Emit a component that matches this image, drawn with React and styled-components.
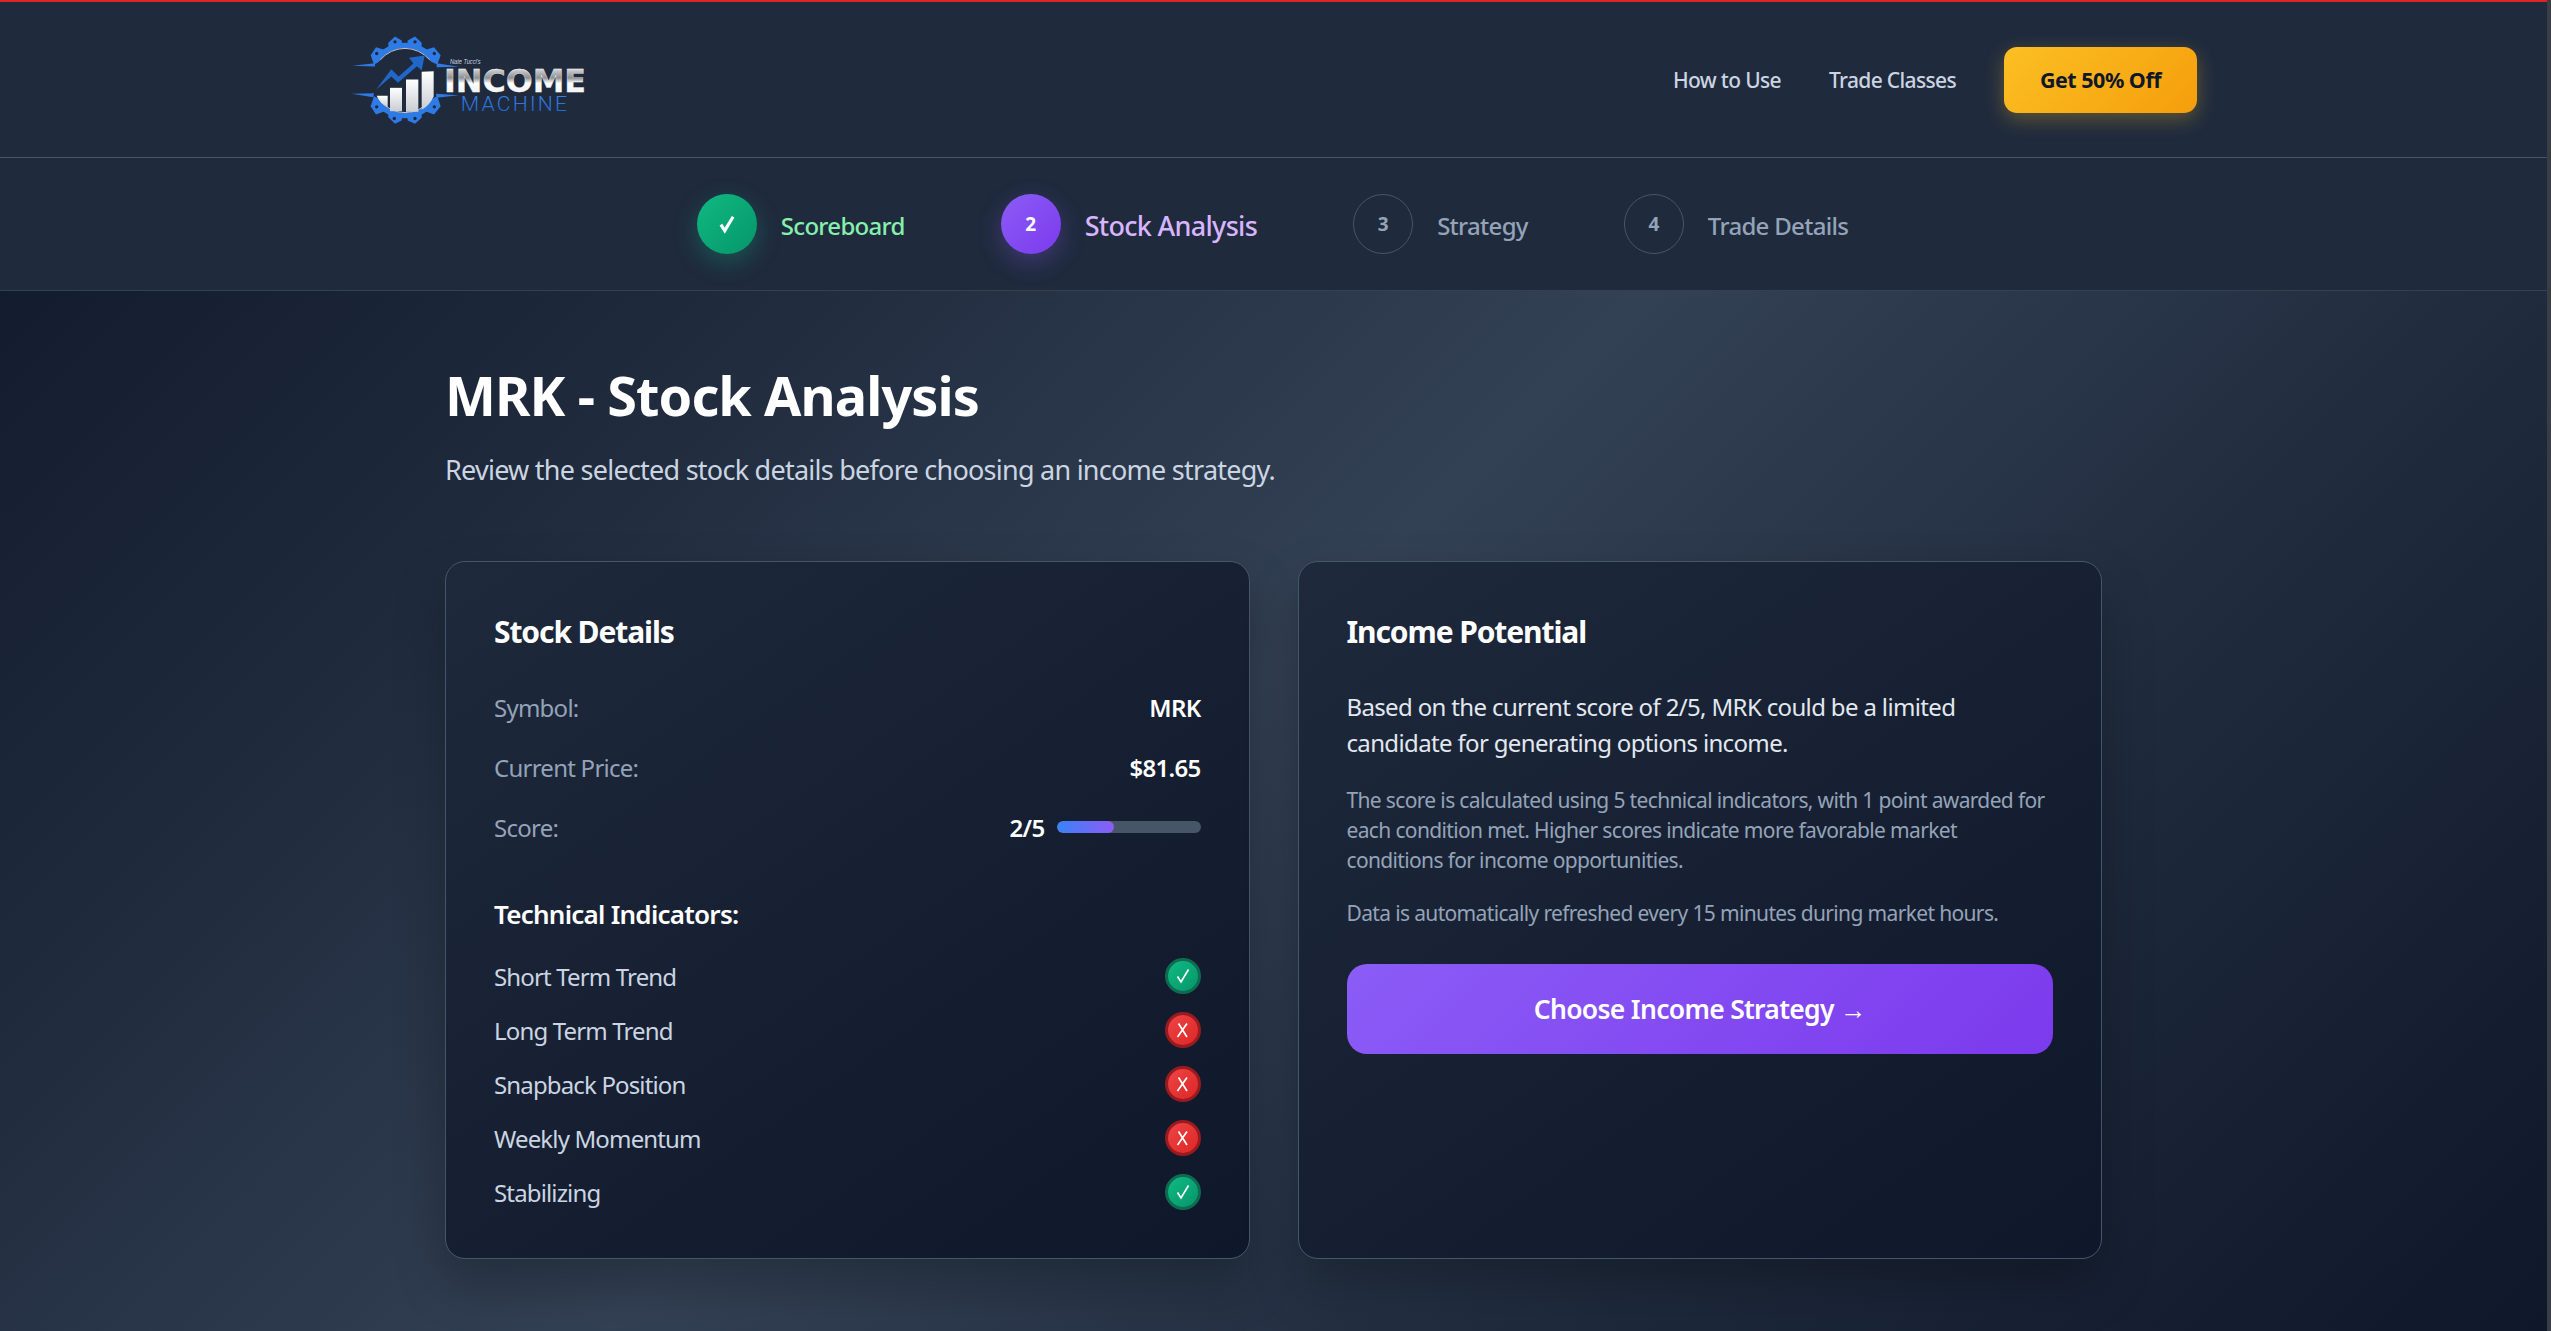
import React from "react";
import styled, { createGlobalStyle } from "styled-components";

const GlobalStyle = createGlobalStyle`
  * { box-sizing: border-box; }
  html, body { margin: 0; padding: 0; background: #0f172a; overflow: hidden; }
  body { font-family: "Noto Sans", "Open Sans", sans-serif; }
`;

const Shell = styled.div`
  display: flex;
  width: 2551px;
  height: 1331px;
  overflow: hidden;
`;

const ScrollEdge = styled.div`
  width: 4px;
  flex: none;
  background: #3a3d42;
`;

const Page = styled.div`
  flex: 1;
  min-width: 0;
  display: flex;
  flex-direction: column;
  background: linear-gradient(135deg, #0f172a 0%, #1e293b 25%, #334155 50%, #1e293b 75%, #0f172a 100%);
`;

const Header = styled.header`
  height: 158px;
  flex: none;
  border-top: 2px solid #dc2626;
  border-bottom: 1px solid #475569;
  background: #1f2a3d;
  display: flex;
  justify-content: center;
  align-items: center;
`;

const HeaderInner = styled.div`
  width: 1847px;
  display: flex;
  align-items: center;
  justify-content: space-between;
`;

const Nav = styled.nav`
  display: flex;
  align-items: center;
  gap: 48px;
`;

const NavLink = styled.a`
  font-size: 21px;
  font-weight: 500;
  letter-spacing: -0.65px;
  color: #cbd5e1;
`;

const OfferButton = styled.a`
  width: 193px;
  height: 66px;
  display: flex;
  align-items: center;
  justify-content: center;
  border-radius: 13px;
  font-size: 21.5px;
  font-weight: 700;
  letter-spacing: -0.5px;
  color: #0f172a;
  background: linear-gradient(135deg, #fbbf24, #f59e0b);
  box-shadow: 0 6px 20px rgba(251, 191, 36, 0.3);
`;

const Stepper = styled.div`
  height: 133px;
  flex: none;
  display: flex;
  align-items: center;
  justify-content: center;
  gap: 96px;
  padding-right: 2px;
  background: #1f2a3d;
  border-bottom: 1px solid #334155;
`;

const Step = styled.div`
  display: flex;
  align-items: center;
  gap: 24px;
`;

const stepFills = {
  done: "background: linear-gradient(135deg, #10b981, #059669); box-shadow: 0 8px 24px rgba(16, 185, 129, 0.3); color: #fff;",
  active: "background: linear-gradient(135deg, #8b5cf6, #7c3aed); box-shadow: 0 8px 24px rgba(139, 92, 246, 0.3); color: #fff;",
  todo: "border: 1px solid #475569; color: #94a3b8;",
};

const StepCircle = styled.div`
  width: 60px;
  height: 60px;
  border-radius: 50%;
  display: flex;
  align-items: center;
  justify-content: center;
  font-size: 19px;
  font-weight: 700;
  ${(p) => stepFills[p.$state]}
`;

const stepColors = { done: "#86efac", active: "#d8b4fe", todo: "#94a3b8" };

const StepLabel = styled.span`
  padding-top: 2px;
  font-size: ${(p) => (p.$state === "active" ? 27 : 24)}px;
  font-weight: 500;
  letter-spacing: -0.7px;
  color: ${(p) => stepColors[p.$state]};
`;

const Main = styled.main`
  width: 1657px;
  margin: 0 auto;
  padding-top: 62px;
`;

const Title = styled.h1`
  margin: 0;
  font-size: 54px;
  line-height: 84px;
  font-weight: 700;
  letter-spacing: -0.9px;
  color: #fff;
`;

const Subtitle = styled.p`
  margin: 12px 0 0;
  font-size: 27px;
  line-height: 42px;
  letter-spacing: -0.75px;
  color: #cbd5e1;
`;

const Cards = styled.div`
  margin-top: 70px;
  display: grid;
  grid-template-columns: 1fr 1fr;
  gap: 48px;
`;

const Card = styled.section`
  height: 698px;
  padding: 48px;
  border: 1px solid #475569;
  border-radius: 20px;
  background: linear-gradient(145deg, #1e293b, #0f172a);
  box-shadow: 0 25px 50px rgba(0, 0, 0, 0.25);
`;

const CardTitle = styled.h2`
  margin: 0 0 23px;
  font-size: 30px;
  line-height: 44px;
  font-weight: 700;
  letter-spacing: -1.1px;
  color: #fff;
`;

const DetailRow = styled.div`
  height: 60px;
  display: flex;
  align-items: center;
  justify-content: space-between;
`;

const DetailLabel = styled.span`
  font-size: 24px;
  letter-spacing: -0.75px;
  color: #94a3b8;
`;

const DetailValue = styled.span`
  display: flex;
  align-items: center;
  gap: 12px;
  font-size: 24px;
  font-weight: 600;
  letter-spacing: -0.7px;
  color: #fff;
`;

const ScoreTrack = styled.div`
  width: 144px;
  height: 12px;
  border-radius: 6px;
  overflow: hidden;
  background: #475569;
`;

const ScoreFill = styled.div`
  height: 100%;
  border-radius: 6px;
  background: linear-gradient(90deg, #3b82f6, #8b5cf6);
`;

const SubTitle = styled.h3`
  margin: 37px 0 15px;
  font-size: 26px;
  line-height: 40px;
  font-weight: 600;
  letter-spacing: -0.75px;
  color: #fff;
`;

const IndicatorRow = styled.div`
  height: 54px;
  display: flex;
  align-items: center;
  justify-content: space-between;
`;

const IndicatorName = styled.span`
  font-size: 24px;
  letter-spacing: -0.85px;
  color: #cbd5e1;
`;

const Badge = styled.span`
  width: 36px;
  height: 36px;
  border-radius: 50%;
  display: flex;
  align-items: center;
  justify-content: center;
  border: 3px solid ${(p) => (p.$ok ? "#0f6b50" : "#991b1f")};
  background: ${(p) => (p.$ok ? "linear-gradient(135deg, #10b981, #059669)" : "linear-gradient(135deg, #ef4444, #dc2626)")};
`;

const Lead = styled.p`
  margin: 0 0 24px;
  padding-top: 12px;
  font-size: 24px;
  line-height: 36px;
  letter-spacing: -0.65px;
  color: #e2e8f0;
`;

const Note = styled.p`
  margin: 0 0 23px;
  font-size: 21px;
  line-height: 30px;
  letter-spacing: -0.65px;
  color: #94a3b8;
`;

const StrategyButton = styled.a`
  margin-top: 36px;
  height: 90px;
  display: flex;
  align-items: center;
  justify-content: center;
  border-radius: 20px;
  font-size: 26.5px;
  font-weight: 600;
  letter-spacing: -0.7px;
  color: #fff;
  background: linear-gradient(135deg, #8b5cf6, #7c3aed);
`;

const CheckMark = ({ size = 18, weight = 1.7 }) => (
  <svg width={size} height={size} viewBox="0 0 18 18" fill="none" stroke="#fff" strokeWidth={weight}>
    <path d="M3.5 9.5 L7 15 L14.5 2.5" />
  </svg>
);

const CrossMark = () => (
  <svg width="18" height="18" viewBox="0 0 18 18" fill="none" stroke="#fff" strokeWidth="1.7">
    <path d="M4.5 2.5 L13 16 M13 2.5 L3.5 16" />
  </svg>
);

// gear, bars and arrow drawn in the coordinates of a 3x crop of the logo
const Logo = () => (
  <svg width="240" height="97" viewBox="90 90 720 290" fill="none">
    <defs>
      <linearGradient id="chrome" x1="0" y1="0" x2="0" y2="1">
        <stop offset="0" stopColor="#ffffff" />
        <stop offset="0.4" stopColor="#8d8f93" />
        <stop offset="0.55" stopColor="#ffffff" />
        <stop offset="1" stopColor="#e4e6ea" />
      </linearGradient>
      <linearGradient id="bar" x1="0" y1="0" x2="0" y2="1">
        <stop offset="0" stopColor="#ffffff" />
        <stop offset="1" stopColor="#c9ccd2" />
      </linearGradient>
      <linearGradient id="machine" x1="0" y1="0" x2="0" y2="1">
        <stop offset="0" stopColor="#3b87f0" />
        <stop offset="1" stopColor="#1a5fc8" />
      </linearGradient>
    </defs>
    <g fill="#2f7be6">
      <path d="M205 125 L225 106 L245 118 L248 138 L205 152 Z" />
      <path d="M263 118 L285 106 L305 125 L305 152 L262 138 Z" />
      <path d="M310 148 L342 138 L362 162 L352 190 L325 178 Z" />
      <path d="M200 148 L168 138 L152 162 L162 190 L186 178 Z" />
      <path d="M205 348 L225 368 L245 358 L248 338 L205 322 Z" />
      <path d="M263 358 L285 368 L305 350 L305 322 L262 338 Z" />
      <path d="M310 328 L342 340 L362 315 L352 285 L325 298 Z" />
      <path d="M200 328 L168 340 L152 315 L162 285 L186 298 Z" />
      <path d="M97 194 L165 186 L165 196 Z" />
      <path d="M95 278 L162 276 L160 288 Z" />
      <path d="M350 186 L416 197 L350 198 Z" />
      <path d="M348 278 L416 282 L350 290 Z" />
    </g>
    <path d="M168 178 A106 106 0 0 1 342 178" stroke="#2f7be6" strokeWidth="16" />
    <path d="M168 298 A106 106 0 0 0 342 298" stroke="#2f7be6" strokeWidth="16" />
    <g fill="#1e293b">
      <circle cx="225" cy="122" r="5" />
      <circle cx="285" cy="122" r="5" />
      <circle cx="343" cy="157" r="5" />
      <circle cx="170" cy="157" r="5" />
      <circle cx="223" cy="352" r="5" />
      <circle cx="285" cy="352" r="5" />
      <circle cx="343" cy="317" r="5" />
      <circle cx="170" cy="317" r="5" />
    </g>
    {/* the inner disc hides the root of the teeth, the light ring only shows top and bottom */}
    <circle cx="255" cy="238" r="97" fill="#1f2a3d" />
    <path d="M181 176 A97 97 0 0 1 329 176" stroke="#c4c8ce" strokeWidth="3" />
    <path d="M181 300 A97 97 0 0 0 329 300" stroke="#c4c8ce" strokeWidth="3" />
    <path d="M170 284 L203 284 L203 318 Q180 308 170 284 Z" fill="url(#bar)" />
    <rect x="210" y="260" width="36" height="70" fill="url(#bar)" />
    <rect x="258" y="235" width="37" height="97" fill="url(#bar)" />
    <path d="M305 212 L341 210 L341 285 Q330 312 305 326 Z" fill="url(#bar)" />
    <path d="M168 266 L214 204 L236 226 L280 187 L267 170 L314 163 L305 208 L291 195 L234 245 L214 226 Z" fill="#2166c9" />
    <text x="390" y="190" fontFamily="Liberation Sans" fontStyle="italic" fontSize="19" fill="#cbd5e1" textLength="92" lengthAdjust="spacingAndGlyphs">Nate Tucci's</text>
    <text x="372" y="274" fontFamily="DejaVu Sans" fontWeight="700" fontSize="94" fill="url(#chrome)" stroke="#fff" strokeWidth="1" textLength="426" lengthAdjust="spacingAndGlyphs">INCOME</text>
    <text x="422" y="330" fontFamily="Roboto" fontWeight="300" fontSize="58" letterSpacing="6" fill="url(#machine)" textLength="326" lengthAdjust="spacingAndGlyphs">MACHINE</text>
  </svg>
);

const steps = [
  { id: 1, label: "Scoreboard", state: "done" },
  { id: 2, label: "Stock Analysis", state: "active" },
  { id: 3, label: "Strategy", state: "todo" },
  { id: 4, label: "Trade Details", state: "todo" },
];

const indicators = [
  { name: "Short Term Trend", ok: true },
  { name: "Long Term Trend", ok: false },
  { name: "Snapback Position", ok: false },
  { name: "Weekly Momentum", ok: false },
  { name: "Stabilizing", ok: true },
];

function App() {
  const score = 2;

  return (
    <Shell>
      <GlobalStyle />
      <Page>
        <Header>
          <HeaderInner>
            <Logo />
            <Nav>
              <NavLink>How to Use</NavLink>
              <NavLink>Trade Classes</NavLink>
              <OfferButton>Get 50% Off</OfferButton>
            </Nav>
          </HeaderInner>
        </Header>

        <Stepper>
          {steps.map((step) => (
            <Step key={step.id}>
              <StepCircle $state={step.state}>
                {step.state === "done" ? <CheckMark size={20} weight={2.8} /> : step.id}
              </StepCircle>
              <StepLabel $state={step.state}>{step.label}</StepLabel>
            </Step>
          ))}
        </Stepper>

        <Main>
          <Title>MRK - Stock Analysis</Title>
          <Subtitle>Review the selected stock details before choosing an income strategy.</Subtitle>

          <Cards>
            <Card>
              <CardTitle>Stock Details</CardTitle>
              <DetailRow>
                <DetailLabel>Symbol:</DetailLabel>
                <DetailValue>MRK</DetailValue>
              </DetailRow>
              <DetailRow>
                <DetailLabel>Current Price:</DetailLabel>
                <DetailValue>$81.65</DetailValue>
              </DetailRow>
              <DetailRow>
                <DetailLabel>Score:</DetailLabel>
                <DetailValue>
                  {score}/5
                  <ScoreTrack>
                    <ScoreFill style={{ width: `${(score / 5) * 100}%` }} />
                  </ScoreTrack>
                </DetailValue>
              </DetailRow>

              <SubTitle>Technical Indicators:</SubTitle>
              {indicators.map((item) => (
                <IndicatorRow key={item.name}>
                  <IndicatorName>{item.name}</IndicatorName>
                  <Badge $ok={item.ok}>{item.ok ? <CheckMark /> : <CrossMark />}</Badge>
                </IndicatorRow>
              ))}
            </Card>

            <Card>
              <CardTitle>Income Potential</CardTitle>
              <Lead>Based on the current score of 2/5, MRK could be a limited candidate for generating options income.</Lead>
              <Note>The score is calculated using 5 technical indicators, with 1 point awarded for each condition met. Higher scores indicate more favorable market conditions for income opportunities.</Note>
              <Note>Data is automatically refreshed every 15 minutes during market hours.</Note>
              <StrategyButton>Choose Income Strategy →</StrategyButton>
            </Card>
          </Cards>
        </Main>
      </Page>
      <ScrollEdge />
    </Shell>
  );
}

export default App;
